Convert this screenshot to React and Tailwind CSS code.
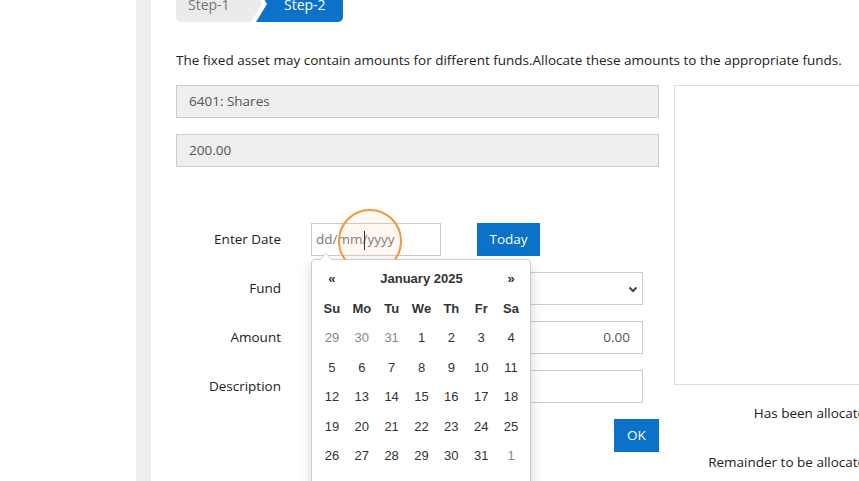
import React from 'react'

const weeks = [
    [[29, true], [30, true], [31, true], [1], [2], [3], [4]],
    [[5], [6], [7], [8], [9], [10], [11]],
    [[12], [13], [14], [15], [16], [17], [18]],
    [[19], [20], [21], [22], [23], [24], [25]],
    [[26], [27], [28], [29], [30], [31], [1, true]],
]

const dayNames = ['Su', 'Mo', 'Tu', 'We', 'Th', 'Fr', 'Sa']

const DatePicker = () => {
    return (
        <div className="absolute -left-px top-full mt-[4px] w-[220px] bg-white border border-[#cccccc] rounded-[4px] shadow-[0_6px_12px_rgba(0,0,0,0.18)] pl-[5px] pr-[4px] pt-[4px] pb-[40px] font-['Liberation_Sans',Arial,sans-serif] text-[13px] text-[#333] z-10">
            <div className="absolute -top-[7px] left-[7px] w-0 h-0 border-l-[7px] border-r-[7px] border-b-[7px] border-l-transparent border-r-transparent border-b-[#cccccc]" />
            <div className="absolute -top-[6px] left-[8px] w-0 h-0 border-l-[6px] border-r-[6px] border-b-[6px] border-l-transparent border-r-transparent border-b-white" />
            <div className="grid grid-cols-7 w-[209px]">
                <div className="h-[29.5px] flex items-center justify-center font-bold">«</div>
                <div className="col-span-5 h-[29.5px] flex items-center justify-center font-bold">January 2025</div>
                <div className="h-[29.5px] flex items-center justify-center font-bold">»</div>
                {dayNames.map((d) => (
                    <div key={d} className="h-[29.5px] flex items-center justify-center font-bold">{d}</div>
                ))}
                {weeks.flat().map(([n, muted], i) => (
                    <div
                        key={i}
                        className={`h-[29.5px] flex items-center justify-center ${muted ? 'text-[#888]' : 'text-[#333]'}`}
                    >
                        {n}
                    </div>
                ))}
            </div>
        </div>
    )
}

const FormRow = ({ label, children }) => (
    <div className="flex items-center h-[33px]">
        <div className="w-[135px] pr-[30px] text-right shrink-0">{label}</div>
        {children}
    </div>
)

export default function App() {
    return (
        <div className="w-[859px] h-[481px] overflow-hidden bg-white flex font-['Open_Sans',sans-serif] text-[13.5px] text-[#222]">
            <div className="w-[136px] shrink-0" />
            <div className="w-[15px] shrink-0 bg-[#eeeeee]" />

            <div className="pl-[25px] shrink-0 w-[900px]">
                {/* wizard steps */}
                <div className="flex h-[36px] -mt-[14px] text-[14px]">
                    <div className="w-[86px] h-full bg-[#ebebeb] text-[#777] rounded-bl-[5px] flex items-center pl-[12px] [clip-path:polygon(0_0,calc(100%-11px)_0,100%_50%,calc(100%-11px)_100%,0_100%)]">
                        Step-1
                    </div>
                    <div className="w-[87px] -ml-[6px] h-full bg-[#0a72c9] text-white rounded-br-[5px] flex items-center pl-[28px] [clip-path:polygon(0_0,100%_0,100%_100%,0_100%,11px_50%)]">
                        Step-2
                    </div>
                </div>

                <p className="mt-[28px] leading-[20px]">
                    The fixed asset may contain amounts for different funds.Allocate these amounts to the appropriate funds.
                </p>

                <div className="flex gap-[15px] mt-[15px]">
                    <div className="w-[483px] shrink-0 flex flex-col">
                        <div className="h-[33px] bg-[#eeeeee] border border-[#cccccc] px-3 flex items-center text-[#555]">6401: Shares</div>
                        <div className="h-[33px] mt-[16px] bg-[#eeeeee] border border-[#cccccc] px-3 flex items-center text-[#555]">200.00</div>

                        <div className="mt-[56px] flex flex-col gap-[16px]">
                            <FormRow label="Enter Date">
                                <div className="relative w-[130px] h-[33px] border border-[#cccccc] flex items-center pl-[4px] text-[#777]">
                                    dd/mm/yyyy
                                    <span className="absolute left-[52px] top-[7px] w-px h-[19px] bg-[#222]" />
                                    <span className="absolute left-[26px] -top-[15px] w-[64px] h-[64px] rounded-full border-[2.5px] border-[#f0973f] bg-[rgba(255,190,130,0.1)]" />
                                    <DatePicker />
                                </div>
                                <button className="ml-[36px] w-[63px] h-[33px] bg-[#0a72c9] text-white">Today</button>
                            </FormRow>
                            <FormRow label="Fund">
                                <div className="w-[332px] h-[33px] border border-[#cccccc] flex items-center justify-end pr-[3px]">
                                    <svg width="12" height="12" viewBox="0 0 12 12">
                                        <path d="M2.5 4.5l3.5 3.5 3.5-3.5" fill="none" stroke="#444" strokeWidth="2" />
                                    </svg>
                                </div>
                            </FormRow>
                            <FormRow label="Amount">
                                <div className="w-[332px] h-[33px] border border-[#cccccc] flex items-center justify-end pr-[12px] text-[#555]">0.00</div>
                            </FormRow>
                            <FormRow label="Description">
                                <div className="w-[332px] h-[33px] border border-[#cccccc]" />
                            </FormRow>
                            <div className="flex justify-end">
                                <button className="w-[45px] h-[33px] bg-[#0a72c9] text-white">OK</button>
                            </div>
                        </div>
                    </div>

                    <div className="w-[240px] shrink-0 flex flex-col">
                        <div className="h-[300px] border border-[#dddddd]" />
                        <div className="mt-[18px] leading-[20px] text-right pr-[37px]">Has been allocated:</div>
                        <div className="mt-[29px] leading-[20px] text-right pr-[37px]">Remainder to be allocated:</div>
                    </div>
                </div>
            </div>
        </div>
    )
}
